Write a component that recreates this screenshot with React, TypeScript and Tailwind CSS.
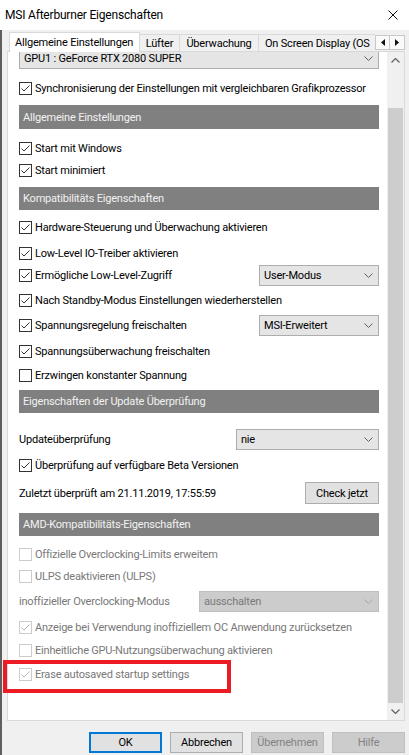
import React from "react";

type CheckProps = { checked?: boolean; disabled?: boolean };

function Check({ checked, disabled }: CheckProps) {
  return (
    <span
      className={`flex h-[13px] w-[13px] shrink-0 items-center justify-center border bg-white ${
        disabled ? "border-[#cccccc]" : "border-[#333333]"
      }`}
    >
      {checked && (
        <svg width="11" height="11" viewBox="0 0 11 11">
          <path
            d="M1.5 5.5L4 8L9.5 2.5"
            fill="none"
            stroke={disabled ? "#b4b4b4" : "#333333"}
            strokeWidth="1"
          />
        </svg>
      )}
    </span>
  );
}

function Chevron({ disabled }: { disabled?: boolean }) {
  return (
    <svg width="9" height="5" viewBox="0 0 9 5">
      <path d="M0.5 0.5L4.5 4.5L8.5 0.5" fill="none" stroke={disabled ? "#a8a8a8" : "#606060"} strokeWidth="1" />
    </svg>
  );
}

function Combo({ value, className = "", disabled }: { value: string; className?: string; disabled?: boolean }) {
  return (
    <div
      className={`flex h-[21px] items-center justify-between border pl-[4px] pr-[5px] ${
        disabled ? "border-[#bfbfbf] bg-[#cccccc] text-[#7a7a7a]" : "border-[#adadad] bg-[#e5e5e5] text-black"
      } ${className}`}
    >
      <span>{value}</span>
      <Chevron disabled={disabled} />
    </div>
  );
}

function Row({
  label,
  checked,
  disabled,
  className = "",
  children,
}: {
  label: string;
  checked?: boolean;
  disabled?: boolean;
  className?: string;
  children?: React.ReactNode;
}) {
  return (
    <div className={`flex items-center ${className}`}>
      <Check checked={checked} disabled={disabled} />
      <span className={`ml-[3px] whitespace-nowrap ${disabled ? "text-[#787878]" : "text-black"}`}>{label}</span>
      {children}
    </div>
  );
}

function Header({ title, className = "" }: { title: string; className?: string }) {
  return (
    <div className={`flex items-center bg-[#808080] pl-[4px] text-[#f2f2f2] ${className}`}>{title}</div>
  );
}

function DlgButton({ label, variant }: { label: string; variant: "default" | "normal" | "disabled" }) {
  const style =
    variant === "default"
      ? "border-2 border-[#0078d7] bg-[#e1e1e1] text-black"
      : variant === "normal"
      ? "border border-[#adadad] bg-[#e1e1e1] text-black"
      : "border border-[#bfbfbf] bg-[#cccccc] text-[#838383]";
  return <div className={`flex h-[21px] w-[73px] items-center justify-center ${style}`}>{label}</div>;
}

export default function App() {
  return (
    <div className="relative flex h-[755px] w-[409px] flex-col overflow-hidden bg-[#f0f0f0] font-['Roboto',sans-serif] text-[11px] leading-none tracking-[-0.2px] text-black">
      {/* title bar */}
      <div className="flex h-[30px] shrink-0 items-center justify-between bg-white pl-[5px] pr-[11px]">
        <span className="text-[12px]">MSI Afterburner Eigenschaften</span>
        <svg width="10" height="10" viewBox="0 0 10 10">
          <path d="M0.5 0.5L9.5 9.5M9.5 0.5L0.5 9.5" stroke="#111" strokeWidth="1" />
        </svg>
      </div>

      <div className="flex flex-1 flex-col border-l-2 border-[#5f5f5f]">
        {/* tabs */}
        <div className="mt-[2px] flex h-[20px] items-end pl-[7px] pr-[4px]">
          <div className="relative z-10 flex h-[20px] w-[131px] items-center border border-b-0 border-[#d9d9d9] bg-white pl-[5px]">
            Allgemeine Einstellungen
          </div>
          <div className="mb-[1px] flex h-[17px] w-[40px] items-center justify-center border-t border-r border-[#d9d9d9]">
            Lüfter
          </div>
          <div className="mb-[1px] flex h-[17px] w-[79px] items-center justify-center border-t border-r border-[#d9d9d9]">
            Überwachung
          </div>
          <div className="mb-[1px] flex h-[17px] flex-1 items-center whitespace-nowrap border-t border-[#d9d9d9] pl-[6px]">
            On Screen Display (OS
          </div>
          <div className="mb-[2px] mt-[3px] flex self-start">
            <div className="flex h-[15px] w-[15px] items-center justify-center border border-[#c8c8c8] bg-[#fafafa]">
              <svg width="4" height="7" viewBox="0 0 4 7">
                <path d="M4 0L0 3.5L4 7Z" fill="#111" />
              </svg>
            </div>
            <div className="flex h-[15px] w-[15px] items-center justify-center border border-l-0 border-[#c8c8c8] bg-[#fafafa]">
              <svg width="4" height="7" viewBox="0 0 4 7">
                <path d="M0 0L4 3.5L0 7Z" fill="#111" />
              </svg>
            </div>
          </div>
        </div>

        {/* panel */}
        <div className="-mt-[1px] ml-[5px] flex h-[670px] w-[398px] border border-[#d9d9d9] bg-white">
          <div className="flex-1 overflow-hidden pl-[11px] pr-[8px]">
            <div className="-mt-[4px] flex flex-col">
              <Combo value="GPU1 : GeForce RTX 2080 SUPER" className="w-full" />
              <Row className="mt-[8px] h-[22px]" checked label="Synchronisierung der Einstellungen mit vergleichbaren Grafikprozessor" />
              <Header className="mt-[6px] h-[24px]" title="Allgemeine Einstellungen" />
              <Row className="mt-[8px] h-[22px]" checked label="Start mit Windows" />
              <Row className="h-[22px]" checked label="Start minimiert" />
              <Header className="mt-[6px] h-[23px]" title="Kompatibilitäts Eigenschaften" />
              <Row className="mt-[6px] h-[22px]" checked label="Hardware-Steuerung und Überwachung aktivieren" />
              <Row className="mt-[4px] h-[22px]" checked label="Low-Level IO-Treiber aktivieren" />
              <Row className="mt-[1px] h-[21px]" checked label="Ermögliche Low-Level-Zugriff">
                <Combo value="User-Modus" className="ml-auto w-[120px]" />
              </Row>
              <Row className="mt-[3px] h-[22px]" checked label="Nach Standby-Modus Einstellungen wiederherstellen" />
              <Row className="mt-[4px] h-[21px]" checked label="Spannungsregelung freischalten">
                <Combo value="MSI-Erweitert" className="ml-auto w-[120px]" />
              </Row>
              <Row className="mt-[4px] h-[22px]" checked label="Spannungsüberwachung freischalten" />
              <Row className="mt-[2px] h-[22px]" label="Erzwingen konstanter Spannung" />
              <Header className="mt-[4px] h-[23px]" title="Eigenschaften der Update Überprüfung" />
              <div className="mt-[16px] flex h-[21px] items-center">
                <span>Updateüberprüfung</span>
                <Combo value="nie" className="ml-auto w-[143px]" />
              </div>
              <Row className="mt-[4px] h-[22px]" checked label="Überprüfung auf verfügbare Beta Versionen" />
              <div className="mt-[6px] flex h-[22px] items-center">
                <span>Zuletzt überprüft am 21.11.2019, 17:55:59</span>
                <div className="ml-auto flex h-[22px] w-[74px] items-center justify-center border border-[#adadad] bg-[#e1e1e1]">
                  Check jetzt
                </div>
              </div>
              <Header className="mt-[9px] h-[23px]" title="AMD-Kompatibilitäts-Eigenschaften" />
              <Row className="mt-[7px] h-[22px]" disabled label="Offizielle Overclocking-Limits erweitem" />
              <Row className="h-[22px]" disabled label="ULPS deaktivieren (ULPS)" />
              <div className="mt-[4px] flex h-[21px] items-center">
                <span className="text-[#787878]">inoffizieller Overclocking-Modus</span>
                <Combo value="ausschalten" disabled className="ml-auto w-[180px]" />
              </div>
              <Row className="mt-[4px] h-[22px]" disabled checked label="Anzeige bei Verwendung inoffiziellem OC Anwendung zurücksetzen" />
              <Row className="mt-[1px] h-[22px]" disabled label="Einheitliche GPU-Nutzungsüberwachung aktivieren" />
              <Row className="mt-[2px] h-[22px]" disabled checked label="Erase autosaved startup settings" />
            </div>
          </div>

          {/* scrollbar */}
          <div className="flex w-[17px] flex-col bg-[#f0f0f0]">
            <div className="flex h-[17px] items-center justify-center">
              <svg width="9" height="5" viewBox="0 0 9 5">
                <path d="M0.5 4.5L4.5 0.5L8.5 4.5" fill="none" stroke="#606060" strokeWidth="1.2" />
              </svg>
            </div>
            <div className="h-[39px]" />
            <div className="mx-auto w-[15px] flex-1 bg-[#cdcdcd]" />
            <div className="flex h-[17px] items-center justify-center">
              <svg width="9" height="5" viewBox="0 0 9 5">
                <path d="M0.5 0.5L4.5 4.5L8.5 0.5" fill="none" stroke="#606060" strokeWidth="1.2" />
              </svg>
            </div>
          </div>
        </div>

        {/* dialog buttons */}
        <div className="mt-[11px] flex justify-end gap-[8px] pr-[4px]">
          <DlgButton label="OK" variant="default" />
          <DlgButton label="Abbrechen" variant="normal" />
          <DlgButton label="Übernehmen" variant="disabled" />
          <DlgButton label="Hilfe" variant="disabled" />
        </div>
      </div>

      {/* red highlight drawn over the screenshot */}
      <div className="absolute left-[3px] top-[660px] h-[33px] w-[228px] border-[4px] border-[#ed1c24]" />
    </div>
  );
}
